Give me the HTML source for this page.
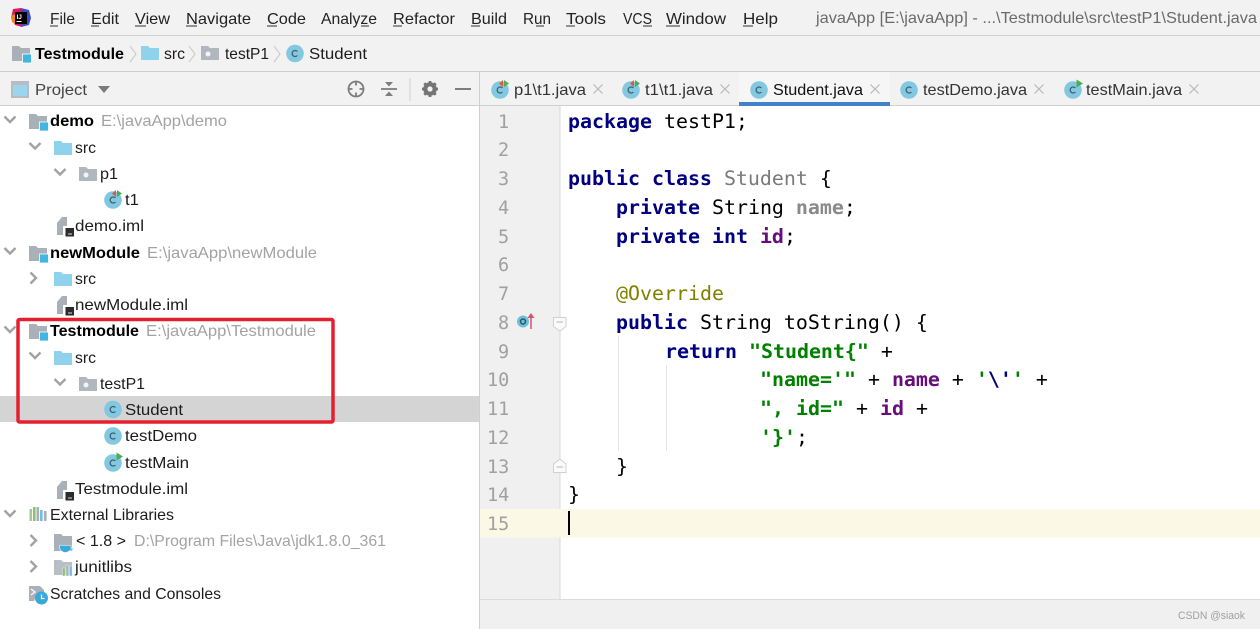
<!DOCTYPE html>
<html><head><meta charset="utf-8"><style>
html,body{margin:0;padding:0;background:#fff;width:1260px;height:629px;overflow:hidden}
svg{display:block;filter:blur(.3px)}
text{font-family:"Liberation Sans","Noto Sans CJK SC",sans-serif;font-size:16px;fill:#1c1c1c}
.b{font-weight:bold;fill:#000}
.g{fill:#a3a3a3}
.m{fill:#222}
.c{font-family:"DejaVu Sans Mono",monospace;font-size:19.93px;fill:#000}
.k{font-weight:bold;fill:#000080}
.s{font-weight:bold;fill:#008000}
.p{font-weight:bold;fill:#660e7a}
.n{font-family:"DejaVu Sans Mono",monospace;font-size:18.5px;fill:#a0a0a0}
</style></head><body>
<svg width="1260" height="629" viewBox="0 0 1260 629" xmlns="http://www.w3.org/2000/svg">
<defs>
<g id="cls"><circle cx="0" cy="0" r="8.8" fill="#82c8e0"/><path d="M2.4-2A3 3 0 1 0 2.4 2" fill="none" stroke="#3f5f6c" stroke-width="1.300"/></g>
<g id="run"><path d="M3.500-10.500V-2.500L10-6.500Z" fill="#4cae4f"/></g>
<g id="red"><path d="M3-10V-3L-1-6.500Z" fill="#e2583e"/><path d="M4-10V-3L9-6.500Z" fill="#4cae4f"/></g>
<g id="mod"><path d="M0 0H7L9 2H18V15H0Z" fill="#a9b0b8"/><rect x="10.500" y="8" width="9" height="9" fill="#40b6e0" stroke="#fff" stroke-width=".8"/></g>
<g id="fold"><path d="M0 0H7L9 2H18V14H0Z" fill="#8fd2ec"/></g>
<g id="pkg"><path d="M0 0H7L9 2H18V14H0Z" fill="#b0b7bf"/><circle cx="7" cy="8" r="2.500" fill="#f4f4f4"/></g>
<g id="iml"><path d="M5 0H10V9H6V18H0V6Z" fill="#a9b0b8"/><rect x="8.500" y="11" width="8.500" height="8.500" fill="#2b2b2b"/><rect x="11" y="16.500" width="4" height="1" fill="#ddd"/></g>
<path id="dn" d="M-5.500-2.500L0 3L5.500-2.500" fill="none" stroke="#a2a2a2" stroke-width="2.400"/>
<path id="rt" d="M-2.500-5.500L3 0L-2.500 5.500" fill="none" stroke="#a2a2a2" stroke-width="2.400"/>
<path id="xx" d="M-4.500-4.500L4.500 4.500M4.500-4.500L-4.500 4.500" stroke="#b8b8b8" stroke-width="1.200" fill="none"/>
<path id="sep" d="M0 0L6 8L0 16" stroke="#c4c4c4" stroke-width="1" fill="none"/>
</defs>

<!-- backgrounds -->
<rect width="1260" height="35" fill="#f2f2f2"/>
<rect y="35" width="1260" height="1" fill="#d0d0d0"/>
<rect y="36" width="1260" height="35" fill="#f2f2f2"/>
<rect y="71" width="1260" height="1.500" fill="#cdcdcd"/>
<rect y="72" width="480" height="33" fill="#f2f2f2"/>
<rect y="105" width="480" height="1" fill="#cfcfcf"/>
<rect x="480" y="72" width="780" height="33" fill="#f2f2f2"/>
<rect x="739" y="72" width="151" height="30" fill="#f6f6f6"/>
<rect x="480" y="105" width="780" height="1" fill="#cfcfcf"/>
<rect x="739" y="102" width="151" height="4" fill="#4083c9"/>
<rect x="479" y="72" width="1" height="557" fill="#cfcfcf"/>
<rect x="480" y="106" width="80" height="494" fill="#f0f0f0"/>
<rect x="559.500" y="106" width="1" height="494" fill="#d8d8d8"/>
<rect x="480" y="509" width="780" height="28.500" fill="#fcf8e6"/>
<rect x="480" y="600" width="780" height="29" fill="#f0f0f0"/>
<rect x="480" y="599" width="780" height="1" fill="#dcdcdc"/>
<rect y="396" width="479" height="26" fill="#d4d4d4"/>

<!-- logo -->
<path d="M13 9L21 8L22 27L15 25L11 18Z" fill="#d81b60"/>
<path d="M21 8L29 10L31 18L29 25L21 27Z" fill="#3b4fc4"/>
<path d="M11 16L15 14V24L12 22Z" fill="#f58220"/>
<rect x="15" y="12" width="12" height="12" fill="#000"/>
<text x="16.500" y="19" style="font-size:6.500px;font-weight:bold;fill:#fff">IJ</text>
<rect x="16.500" y="21" width="5" height="1" fill="#fff"/>

<!-- menu -->
<text class="m" x="50" y="24" textLength="25" lengthAdjust="spacingAndGlyphs">File</text>
<text class="m" x="91" y="24" textLength="28" lengthAdjust="spacingAndGlyphs">Edit</text>
<text class="m" x="135" y="24" textLength="35" lengthAdjust="spacingAndGlyphs">View</text>
<text class="m" x="186" y="24" textLength="65" lengthAdjust="spacingAndGlyphs">Navigate</text>
<text class="m" x="267" y="24" textLength="39" lengthAdjust="spacingAndGlyphs">Code</text>
<text class="m" x="321" y="24" textLength="56" lengthAdjust="spacingAndGlyphs">Analyze</text>
<text class="m" x="393" y="24" textLength="62" lengthAdjust="spacingAndGlyphs">Refactor</text>
<text class="m" x="471" y="24" textLength="36" lengthAdjust="spacingAndGlyphs">Build</text>
<text class="m" x="523" y="24" textLength="28" lengthAdjust="spacingAndGlyphs">Run</text>
<text class="m" x="566" y="24" textLength="40" lengthAdjust="spacingAndGlyphs">Tools</text>
<text class="m" x="623" y="24" textLength="29" lengthAdjust="spacingAndGlyphs">VCS</text>
<text class="m" x="666" y="24" textLength="60" lengthAdjust="spacingAndGlyphs">Window</text>
<text class="m" x="743" y="24" textLength="35" lengthAdjust="spacingAndGlyphs">Help</text>
<g fill="#333">
<rect x="50" y="25.500" width="8" height="1"/><rect x="91" y="25.500" width="8" height="1"/><rect x="135" y="25.500" width="11" height="1"/><rect x="186" y="25.500" width="11" height="1"/><rect x="267" y="25.500" width="10" height="1"/><rect x="361" y="25.500" width="8" height="1"/><rect x="393" y="25.500" width="9" height="1"/><rect x="471" y="25.500" width="9" height="1"/><rect x="536" y="25.500" width="8" height="1"/><rect x="566" y="25.500" width="9" height="1"/><rect x="643" y="25.500" width="9" height="1"/><rect x="666" y="25.500" width="14" height="1"/><rect x="743" y="25.500" width="10" height="1"/>
</g>
<text x="816" y="23" style="fill:#6a6a6a" textLength="441" lengthAdjust="spacingAndGlyphs">javaApp [E:\javaApp] - ...\Testmodule\src\testP1\Student.java</text>

<!-- breadcrumb -->
<use href="#mod" x="12" y="46"/>
<text class="b" x="35" y="59" textLength="89" lengthAdjust="spacingAndGlyphs">Testmodule</text>
<use href="#sep" x="130" y="46"/>
<use href="#fold" x="141" y="46"/>
<text x="164" y="59" textLength="21" lengthAdjust="spacingAndGlyphs">src</text>
<use href="#sep" x="189" y="46"/>
<use href="#pkg" x="201" y="46"/>
<text x="225" y="59" textLength="44" lengthAdjust="spacingAndGlyphs">testP1</text>
<use href="#sep" x="274" y="46"/>
<use href="#cls" x="295" y="53.500"/>
<text x="309" y="59" textLength="58" lengthAdjust="spacingAndGlyphs">Student</text>

<!-- project toolbar -->
<rect x="12" y="82" width="16" height="15" fill="#9ad5ec" stroke="#b5bcc3" stroke-width="2"/>
<rect x="12" y="82" width="16" height="3" fill="#b5bcc3"/>
<text x="35" y="95" style="fill:#444" textLength="52" lengthAdjust="spacingAndGlyphs">Project</text>
<path d="M98 86H110L104 93Z" fill="#7a7a7a"/>
<circle cx="356" cy="89" r="7.500" fill="none" stroke="#7d7d7d" stroke-width="1.800"/>
<path d="M356 81V85.500M356 92.500V97M348 89H352.500M359.500 89H364" stroke="#7d7d7d" stroke-width="1.800"/>
<path d="M381 89H397" stroke="#7d7d7d" stroke-width="1.800"/>
<path d="M385 82H393L389 86.500ZM385 96H393L389 91.500Z" fill="#7d7d7d"/>
<rect x="409.500" y="78" width="1" height="23" fill="#d0d0d0"/>
<circle cx="430" cy="89" r="5" fill="none" stroke="#757575" stroke-width="3.600"/>
<path d="M430 81V97M422 89H438M424.300 83.300L435.700 94.700M435.700 83.300L424.300 94.700" stroke="#757575" stroke-width="2.800"/>
<circle cx="430" cy="89" r="2.600" fill="#f2f2f2"/>
<rect x="455" y="88" width="16" height="2" fill="#7d7d7d"/>

<!-- tree -->
<use href="#dn" x="10" y="119"/><use href="#mod" x="29" y="114"/>
<text class="b" x="50" y="126" textLength="44" lengthAdjust="spacingAndGlyphs">demo</text>
<text class="g" x="101" y="126" textLength="126" lengthAdjust="spacingAndGlyphs">E:\javaApp\demo</text>
<use href="#dn" x="35" y="145.500"/><use href="#fold" x="54" y="141"/>
<text x="75" y="153" textLength="21" lengthAdjust="spacingAndGlyphs">src</text>
<use href="#dn" x="60" y="171.500"/><use href="#pkg" x="79" y="167"/>
<text x="100" y="179" textLength="18" lengthAdjust="spacingAndGlyphs">p1</text>
<use href="#cls" x="113" y="200"/><use href="#red" x="113" y="200"/>
<text x="125" y="205" textLength="14" lengthAdjust="spacingAndGlyphs">t1</text>
<use href="#iml" x="57" y="217"/>
<text x="75" y="231" textLength="69" lengthAdjust="spacingAndGlyphs">demo.iml</text>

<use href="#dn" x="10" y="250.500"/><use href="#mod" x="29" y="246"/>
<text class="b" x="50" y="258" textLength="90" lengthAdjust="spacingAndGlyphs">newModule</text>
<text class="g" x="147" y="258" textLength="170" lengthAdjust="spacingAndGlyphs">E:\javaApp\newModule</text>
<use href="#rt" x="33" y="278"/><use href="#fold" x="54" y="272"/>
<text x="75" y="284" textLength="21" lengthAdjust="spacingAndGlyphs">src</text>
<use href="#iml" x="57" y="296"/>
<text x="75" y="310" textLength="113" lengthAdjust="spacingAndGlyphs">newModule.iml</text>

<use href="#dn" x="10" y="329"/><use href="#mod" x="29" y="324"/>
<text class="b" x="50" y="336" textLength="89" lengthAdjust="spacingAndGlyphs">Testmodule</text>
<text class="g" x="146" y="336" textLength="170" lengthAdjust="spacingAndGlyphs">E:\javaApp\Testmodule</text>
<use href="#dn" x="35" y="355"/><use href="#fold" x="54" y="351"/>
<text x="75" y="363" textLength="21" lengthAdjust="spacingAndGlyphs">src</text>
<use href="#dn" x="60" y="381.500"/><use href="#pkg" x="79" y="377"/>
<text x="100" y="389" textLength="45" lengthAdjust="spacingAndGlyphs">testP1</text>
<use href="#cls" x="113" y="409.500"/>
<text x="125" y="415" textLength="58" lengthAdjust="spacingAndGlyphs">Student</text>
<use href="#cls" x="113" y="436"/>
<text x="125" y="441" textLength="72" lengthAdjust="spacingAndGlyphs">testDemo</text>
<use href="#cls" x="113" y="463"/><use href="#run" x="113" y="463"/>
<text x="125" y="468" textLength="64" lengthAdjust="spacingAndGlyphs">testMain</text>
<use href="#iml" x="57" y="481"/>
<text x="75" y="494" textLength="113" lengthAdjust="spacingAndGlyphs">Testmodule.iml</text>

<use href="#dn" x="10" y="513"/>
<rect x="29.500" y="509" width="2.600" height="12" fill="#a7c890"/><rect x="33" y="507" width="2.600" height="14" fill="#8fbf6f"/><rect x="36.500" y="507" width="2.600" height="14" fill="#a9b0b8"/><rect x="40" y="510" width="2.600" height="11" fill="#6fbfe4"/><rect x="44" y="511" width="2.600" height="10" fill="#a9b0b8"/>
<text x="50" y="520" textLength="124" lengthAdjust="spacingAndGlyphs">External Libraries</text>
<use href="#rt" x="33" y="540.500"/>
<path d="M54 534H61L63 536H72V551H54Z" fill="#a9b0b8"/>
<path d="M59.500 545.500H71V548.500H73V550H70Q68 552.500 65 552.500Q61 552 59.500 548Z" fill="#39a9dc" stroke="#f8f8f8" stroke-width=".6"/>
<text x="76" y="546" textLength="50" lengthAdjust="spacingAndGlyphs">&lt; 1.8 &gt;</text>
<text class="g" x="134" y="546" textLength="252" lengthAdjust="spacingAndGlyphs">D:\Program Files\Java\jdk1.8.0_361</text>
<use href="#rt" x="33" y="566.500"/>
<path d="M54 560H61L63 562H72V575H54Z" fill="#b8bec5"/>
<rect x="62.500" y="568" width="2.600" height="8" fill="#8fbf6f" stroke="#f4f4f4" stroke-width=".4"/><rect x="66" y="565" width="2.600" height="11" fill="#a9b0b8" stroke="#f4f4f4" stroke-width=".4"/><rect x="69.500" y="566" width="2.600" height="10" fill="#6fbfe4" stroke="#f4f4f4" stroke-width=".4"/>
<text x="75" y="572" textLength="57" lengthAdjust="spacingAndGlyphs">junitlibs</text>
<path d="M29 586H40L44 590V596H36L34 601H29Z" fill="#a9b0b8"/>
<path d="M31 589L35 592L31 595" fill="none" stroke="#fff" stroke-width="1.200"/>
<circle cx="41.500" cy="598" r="6.500" fill="#39a9dc"/>
<path d="M41.500 594.500V598.500H44.500" fill="none" stroke="#fff" stroke-width="1.200"/>
<text x="50" y="599" textLength="171" lengthAdjust="spacingAndGlyphs">Scratches and Consoles</text>

<!-- highlight box -->
<rect x="18" y="319.500" width="315" height="102.500" rx="1.500" fill="none" stroke="#e5202e" stroke-width="3.500"/>

<!-- tabs -->
<use href="#cls" x="500" y="90"/><use href="#red" x="500" y="90"/>
<text x="514" y="95" style="fill:#333" textLength="72" lengthAdjust="spacingAndGlyphs">p1\t1.java</text>
<use href="#xx" x="598" y="89"/>
<use href="#cls" x="631" y="90"/><use href="#red" x="631" y="90"/>
<text x="645" y="95" style="fill:#333" textLength="68" lengthAdjust="spacingAndGlyphs">t1\t1.java</text>
<use href="#xx" x="725" y="89"/>
<use href="#cls" x="759" y="90"/>
<text x="773" y="95" style="fill:#111" textLength="90" lengthAdjust="spacingAndGlyphs">Student.java</text>
<use href="#xx" x="875" y="89"/>
<use href="#cls" x="909" y="90"/>
<text x="923" y="95" style="fill:#333" textLength="104" lengthAdjust="spacingAndGlyphs">testDemo.java</text>
<use href="#xx" x="1039" y="89"/>
<use href="#cls" x="1073" y="90"/><use href="#run" x="1073" y="90"/>
<text x="1086" y="95" style="fill:#333" textLength="96" lengthAdjust="spacingAndGlyphs">testMain.java</text>
<use href="#xx" x="1194" y="89"/>

<!-- gutter numbers -->
<text class="n" x="498" y="128">1</text>
<text class="n" x="498" y="156">2</text>
<text class="n" x="498" y="185">3</text>
<text class="n" x="498" y="214">4</text>
<text class="n" x="498" y="243">5</text>
<text class="n" x="498" y="271">6</text>
<text class="n" x="498" y="300">7</text>
<text class="n" x="498" y="329">8</text>
<text class="n" x="498" y="358">9</text>
<text class="n" x="487" y="386">10</text>
<text class="n" x="487" y="415">11</text>
<text class="n" x="487" y="444">12</text>
<text class="n" x="487" y="473">13</text>
<text class="n" x="487" y="501">14</text>
<text class="n" x="487" y="530">15</text>

<!-- gutter marks -->
<circle cx="523" cy="321.500" r="6" fill="#6fc0dc"/>
<circle cx="523" cy="321.500" r="2.500" fill="none" stroke="#2d5566" stroke-width="1.500"/>
<path d="M531 329V316" stroke="#d9536a" stroke-width="1.500"/>
<path d="M527.500 318L531 313L534.500 318Z" fill="#d9536a"/>
<path d="M553.500 317.500H566V326.500L560 331L553.500 326.500Z" fill="#fafafa" stroke="#d0d0d0"/>
<path d="M556.500 322H563" stroke="#b5b5b5"/>
<path d="M553.500 472.500H566V464L560 459L553.500 464Z" fill="#fafafa" stroke="#d0d0d0"/>
<path d="M556.500 467H563" stroke="#b5b5b5"/>
<rect x="618" y="336" width="1" height="115" fill="#e4e4e4"/>
<rect x="666" y="365" width="1" height="86" fill="#e4e4e4"/>

<!-- code -->
<text class="c" xml:space="preserve" x="568" y="128"><tspan class="k">package</tspan> testP1;</text>
<text class="c" xml:space="preserve" x="568" y="185"><tspan class="k">public class</tspan> <tspan style="fill:#7a7a7a">Student</tspan> {</text>
<text class="c" xml:space="preserve" x="616" y="214"><tspan class="k">private</tspan> String <tspan style="font-weight:bold;fill:#8a8a8a">name</tspan>;</text>
<text class="c" xml:space="preserve" x="616" y="243"><tspan class="k">private int</tspan> <tspan class="p">id</tspan>;</text>
<text class="c" xml:space="preserve" x="616" y="300" style="fill:#808000">@Override</text>
<text class="c" xml:space="preserve" x="616" y="329"><tspan class="k">public</tspan> String toString() {</text>
<text class="c" xml:space="preserve" x="665" y="358"><tspan class="k">return</tspan> <tspan class="s">"Student{"</tspan> +</text>
<text class="c" xml:space="preserve" x="760" y="386"><tspan class="s">"name='"</tspan> + <tspan class="p">name</tspan> + <tspan class="s">'</tspan><tspan class="k">\'</tspan><tspan class="s">'</tspan> +</text>
<text class="c" xml:space="preserve" x="760" y="415"><tspan class="s">", id="</tspan> + <tspan class="p">id</tspan> +</text>
<text class="c" xml:space="preserve" x="760" y="444"><tspan class="s">'}'</tspan>;</text>
<text class="c" xml:space="preserve" x="616" y="473">}</text>
<text class="c" xml:space="preserve" x="568" y="501">}</text>
<rect x="568" y="511" width="2" height="24" fill="#000"/>

<!-- watermark -->
<text x="1178" y="619" style="font-size:11px;fill:#a0a0a0" textLength="67" lengthAdjust="spacingAndGlyphs">CSDN @siaok</text>
</svg>
</body></html>
